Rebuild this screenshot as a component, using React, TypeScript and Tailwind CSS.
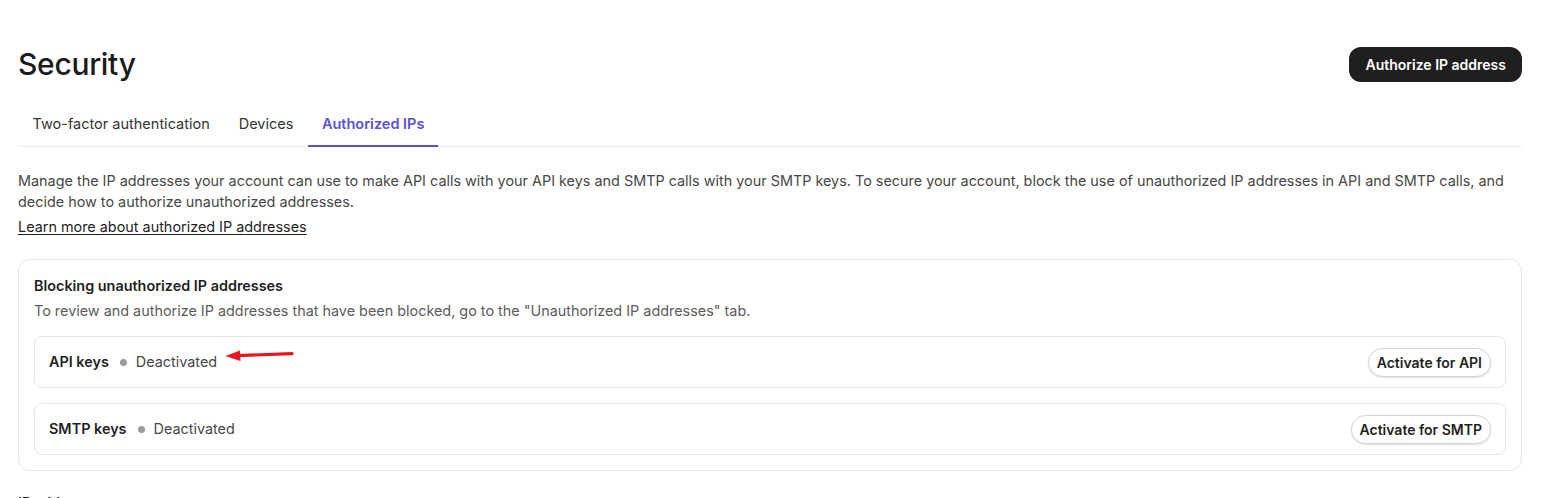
import React from "react";

const tabs = ["Two-factor authentication", "Devices", "Authorized IPs"];
const active = "Authorized IPs";

function KeyRow({ label, action, arrow }: { label: string; action: string; arrow?: boolean }) {
  return (
    <div className="relative flex h-[52px] items-center justify-between rounded-lg border border-[#e6e6e6] pl-[14px] pr-[14px]">
      <div className="flex items-center text-[14.4px] leading-5">
        <span className="font-semibold text-[#1f1f1f]">{label}</span>
        <span className="ml-[11px] mr-[9px] h-[7px] w-[7px] rounded-full bg-[#9a9a9a]" />
        <span className="text-[#474747]">Deactivated</span>
      </div>
      {arrow && (
        <svg
          className="absolute left-[190px] top-[10px]"
          width="70"
          height="16"
          viewBox="0 0 70 16"
        >
          <path d="M12 8.6 L67 6.6" stroke="#e8161b" strokeWidth="3.2" strokeLinecap="round" />
          <path d="M0.5 9 L15 3.4 L15.5 14 Z" fill="#e8161b" />
        </svg>
      )}
      <button className="h-[29px] rounded-full border border-[#d4d4d4] bg-white px-[8px] text-[14px] font-semibold text-[#1f1f1f] shadow-[0_1px_2px_rgba(0,0,0,0.12)]">
        {action}
      </button>
    </div>
  );
}

export default function App() {
  return (
    <div className="h-[498px] overflow-hidden bg-white pl-[18px] pr-[20px] pt-[46px] font-['Inter',sans-serif] text-[#1f1f1f]">
      <header className="flex h-[36px] items-center justify-between">
        <h1 className="text-[30px] font-medium leading-9 tracking-[-0.3px] text-[#1b1b1b]">Security</h1>
        <button className="h-[35px] rounded-xl bg-[#1f1f1f] px-[16px] text-[14px] font-semibold text-white">
          Authorize IP address
        </button>
      </header>

      <nav className="mt-[20px] flex border-b border-[#ececec]">
        {tabs.map((t) => (
          <div
            key={t}
            className={
              t === active
                ? "-mb-px border-b-2 border-[#5b50d6] px-[14px] pb-[11px] pt-[12px] text-[14.5px] font-semibold leading-5 text-[#5b50d6]"
                : "-mb-px border-b-2 border-transparent px-[14.5px] pb-[11px] pt-[12px] text-[14.5px] leading-5 text-[#333333]"
            }
          >
            {t}
          </div>
        ))}
      </nav>

      <p className="mt-[23px] text-[14.4px] leading-[21px] text-[#474747]">
        Manage the IP addresses your account can use to make API calls with your API keys and SMTP calls with your SMTP
        keys. To secure your account, block the use of unauthorized IP addresses in API and SMTP calls, and decide how to
        authorize unauthorized addresses.
      </p>
      <a className="mt-[4px] inline-block text-[14.4px] leading-[21px] text-[#1f1f1f] underline underline-offset-2">
        Learn more about authorized IP addresses
      </a>

      <section className="mt-[21px] rounded-xl border border-[#e6e6e6] px-[15px] pb-[15px] pt-[16px]">
        <h2 className="text-[14.4px] font-semibold leading-5 text-[#1f1f1f]">Blocking unauthorized IP addresses</h2>
        <p className="mt-[5px] text-[14.4px] leading-5 text-[#5c5c5c]">
          To review and authorize IP addresses that have been blocked, go to the "Unauthorized IP addresses" tab.
        </p>
        <div className="mt-[15px] flex flex-col gap-[15px]">
          <KeyRow label="API keys" action="Activate for API" arrow />
          <KeyRow label="SMTP keys" action="Activate for SMTP" />
        </div>
      </section>

      <h2 className="mt-[22px] text-[14px] font-semibold leading-5 text-[#1f1f1f]">IP addresses</h2>
    </div>
  );
}
